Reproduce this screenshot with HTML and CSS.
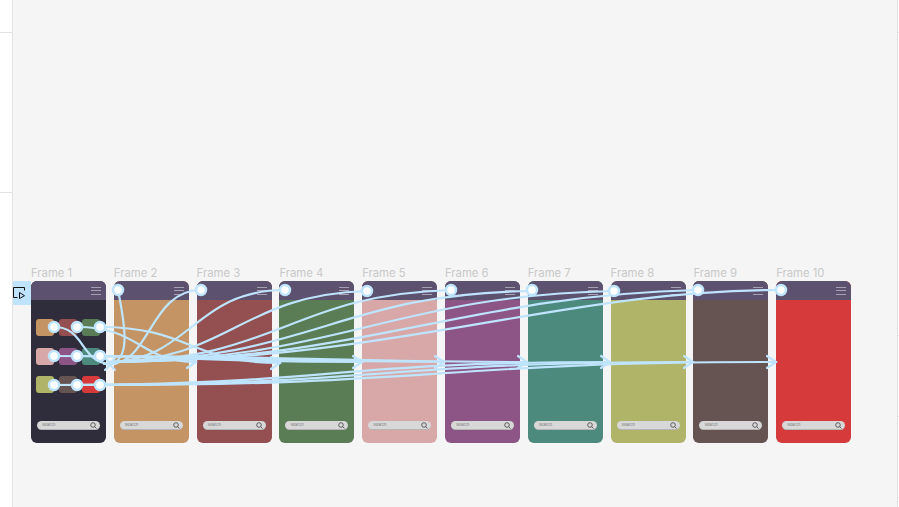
FILE: index.html
```html
<!DOCTYPE html>
<html lang="en">
<head>
<meta charset="utf-8">
<title>Prototype flow</title>
<link rel="stylesheet" href="styles.css">
</head>
<body>
<div class="page">
  <div class="ruler ruler-left"><i class="tick t1"></i><i class="tick t2"></i></div>
  <main class="canvas">
    <div class="frames">
      <section class="item"><h2>Frame 1</h2><div class="frame f1 home">
        <div class="start"><svg width="18" height="24" viewBox="0 0 18 24"><path d="M4.500 16.500H.500V6.500H11.500V9.500" class="sk"/><path d="M6.500 11.500L11.500 14.700 6.500 17.500Z" class="sk"/></svg></div>
        <div class="bar"><span class="menu"><i></i><i></i><i></i></span></div>
        <div class="body">
          <div class="tiles">
            <b class="c2"></b><b class="c3"></b><b class="c4"></b>
            <b class="c5"></b><b class="c6"></b><b class="c7"></b>
            <b class="c8"></b><b class="c9"></b><b class="c10"></b>
          </div>
          <div class="search"><span>Search</span><svg width="7" height="7" viewBox="0 0 7 7"><circle cx="3" cy="3" r="2.300"/><path d="M4.700 4.700L6.500 6.500"/></svg></div>
        </div></div></section>
      <section class="item"><h2>Frame 2</h2><div class="frame c2"><div class="bar"><span class="menu"><i></i><i></i><i></i></span></div><div class="body"><div class="search"><span>Search</span><svg width="7" height="7" viewBox="0 0 7 7"><circle cx="3" cy="3" r="2.300"/><path d="M4.700 4.700L6.500 6.500"/></svg></div></div></div></section>
      <section class="item"><h2>Frame 3</h2><div class="frame c3"><div class="bar"><span class="menu"><i></i><i></i><i></i></span></div><div class="body"><div class="search"><span>Search</span><svg width="7" height="7" viewBox="0 0 7 7"><circle cx="3" cy="3" r="2.300"/><path d="M4.700 4.700L6.500 6.500"/></svg></div></div></div></section>
      <section class="item"><h2>Frame 4</h2><div class="frame c4"><div class="bar"><span class="menu"><i></i><i></i><i></i></span></div><div class="body"><div class="search"><span>Search</span><svg width="7" height="7" viewBox="0 0 7 7"><circle cx="3" cy="3" r="2.300"/><path d="M4.700 4.700L6.500 6.500"/></svg></div></div></div></section>
      <section class="item"><h2>Frame 5</h2><div class="frame c5"><div class="bar"><span class="menu"><i></i><i></i><i></i></span></div><div class="body"><div class="search"><span>Search</span><svg width="7" height="7" viewBox="0 0 7 7"><circle cx="3" cy="3" r="2.300"/><path d="M4.700 4.700L6.500 6.500"/></svg></div></div></div></section>
      <section class="item"><h2>Frame 6</h2><div class="frame c6"><div class="bar"><span class="menu"><i></i><i></i><i></i></span></div><div class="body"><div class="search"><span>Search</span><svg width="7" height="7" viewBox="0 0 7 7"><circle cx="3" cy="3" r="2.300"/><path d="M4.700 4.700L6.500 6.500"/></svg></div></div></div></section>
      <section class="item"><h2>Frame 7</h2><div class="frame c7"><div class="bar"><span class="menu"><i></i><i></i><i></i></span></div><div class="body"><div class="search"><span>Search</span><svg width="7" height="7" viewBox="0 0 7 7"><circle cx="3" cy="3" r="2.300"/><path d="M4.700 4.700L6.500 6.500"/></svg></div></div></div></section>
      <section class="item"><h2>Frame 8</h2><div class="frame c8"><div class="bar"><span class="menu"><i></i><i></i><i></i></span></div><div class="body"><div class="search"><span>Search</span><svg width="7" height="7" viewBox="0 0 7 7"><circle cx="3" cy="3" r="2.300"/><path d="M4.700 4.700L6.500 6.500"/></svg></div></div></div></section>
      <section class="item"><h2>Frame 9</h2><div class="frame c9"><div class="bar"><span class="menu"><i></i><i></i><i></i></span></div><div class="body"><div class="search"><span>Search</span><svg width="7" height="7" viewBox="0 0 7 7"><circle cx="3" cy="3" r="2.300"/><path d="M4.700 4.700L6.500 6.500"/></svg></div></div></div></section>
      <section class="item"><h2>Frame 10</h2><div class="frame c10"><div class="bar"><span class="menu"><i></i><i></i><i></i></span></div><div class="body"><div class="search"><span>Search</span><svg width="7" height="7" viewBox="0 0 7 7"><circle cx="3" cy="3" r="2.300"/><path d="M4.700 4.700L6.500 6.500"/></svg></div></div></div></section>
    </div>
    <svg class="wires" width="899" height="507" viewBox="0 0 899 507">
      <g class="w">
        <path d="M118 290C126 330 130 360 110 364"/>
        <path d="M201 290C150 290 150 364 110 364"/>
        <path d="M285 290C195 290 190 360 110 362"/>
        <path d="M367 291C240 295 230 360 110 362"/>
        <path d="M451 290C290 295 280 360 110 362"/>
        <path d="M532 291C340 293 310 360 110 362"/>
        <path d="M614 291C390 296 340 360 110 362"/>
        <path d="M698 290C460 296 370 360 110 362"/>
        <path d="M781 290C560 290 400 360 110 362"/>
        <path d="M54 327C85 327 80 362 110 364"/>
        <path d="M77 327C140 327 140 362 196 362"/>
        <path d="M100 327C190 327 190 363 280 363"/>
        <path d="M54 356C200 356 200 362 362 362"/>
        <path d="M77 356C260 356 260 362 444 362"/>
        <path d="M100 356C310 356 310 362 527 362"/>
        <path d="M54 385C330 385 330 362 610 362"/>
        <path d="M77 385C380 385 380 362 693 362"/>
        <path d="M100 385C440 385 440 362 776 362"/>
      </g>
      <g class="w heads">
        <path d="M105 358L111 364 105 370"/><path d="M115 358L109 364 115 370"/><path d="M104 364H116"/>
        <path d="M187 356L196 362 187 368"/><path d="M271 357L280 363 271 369"/>
        <path d="M353 356L362 362 353 368"/><path d="M435 356L444 362 435 368"/>
        <path d="M518 356L527 362 518 368"/><path d="M601 356L610 362 601 368"/>
        <path d="M684 356L693 362 684 368"/><path d="M767 356L776 362 767 368"/>
      </g>
      <g class="dots">
        <circle cx="54" cy="327"/><circle cx="77" cy="327"/><circle cx="100" cy="327"/>
        <circle cx="54" cy="356"/><circle cx="77" cy="356"/><circle cx="100" cy="356"/>
        <circle cx="54" cy="385"/><circle cx="77" cy="385"/><circle cx="100" cy="385"/>
        <circle cx="118" cy="290"/><circle cx="201" cy="290"/><circle cx="285" cy="290"/>
        <circle cx="367" cy="291"/><circle cx="451" cy="290"/><circle cx="532" cy="290"/>
        <circle cx="614" cy="291"/><circle cx="698" cy="290"/><circle cx="781" cy="290"/>
      </g>
    </svg>
  </main>
  <div class="ruler ruler-right"><i class="tick r1"></i><i class="tick r2"></i><i class="tick r3"></i><i class="tick r4"></i></div>
</div>
</body>
</html>
```
FILE: styles.css
```css
html, body { margin: 0; height: 100%; overflow: hidden; background: #fff; }
.page { display: flex; width: 899px; height: 507px; font-family: Inter, "Liberation Sans", sans-serif; }
.ruler { display: flex; flex-direction: column; flex: none; background: #fff; }
.ruler-left { width: 12px; }
.ruler-right { width: 1px; }
.tick { display: block; height: 1px; background: #e2e2e2; }
.t1 { margin-top: 32px; }
.t2 { margin-top: 159px; }
.r1 { margin-top: 32px; }
.r2 { margin-top: 302px; }
.r3 { margin-top: 80px; }
.r4 { margin-top: 80px; }
.canvas { position: relative; flex: 1; background: #f5f5f5; border-left: 1px solid #e2e2e2; border-right: 1px solid #e2e2e2; }
.frames { display: flex; gap: 7.800px; padding: 266px 0 0 18px; }
.item { width: 75px; flex: none; }
.item h2 { margin: 0 0 1px; height: 14px; font-size: 11.300px; line-height: 14px; font-weight: 400; color: #c9c9c9; white-space: nowrap; }
.frame { position: relative; display: flex; flex-direction: column; height: 162px; border-radius: 6px; }
.bar { flex: none; display: flex; justify-content: flex-end; align-items: center; height: 19px; padding-right: 5px; background: #5d5170; border-radius: 6px 6px 0 0; }
.menu { display: flex; flex-direction: column; gap: 2.500px; width: 10px; }
.menu i { display: block; height: 1px; background: #a79fb2; }
.body { flex: 1; display: flex; flex-direction: column; justify-content: flex-end; padding: 0 6px 13px; }
.search { display: flex; align-items: center; justify-content: space-between; height: 8px; padding: 0 3px 0 5px; background: #d8d8d8; border-radius: 5px; border-bottom: 1px solid #b5b5b5; }
.search span { font-size: 4px; line-height: 8px; color: #777; }
.search svg { fill: none; stroke: #444; stroke-width: .8; }
.home { background: #2f2c3b; }
.tiles { display: grid; grid-template-columns: repeat(3, 18px); grid-auto-rows: 17px; column-gap: 5px; row-gap: 11.500px; margin: 19px 0 auto -1px; }
.tiles b { display: block; border-radius: 3px; }
.c2 { background: #c49464; }
.c3 { background: #945050; }
.c4 { background: #5a7d56; }
.c5 { background: #d8a8a8; }
.c6 { background: #8c5586; }
.c7 { background: #4d8a7e; }
.c8 { background: #afb468; }
.c9 { background: #655452; }
.c10 { background: #d63a3a; }
.start { position: absolute; left: -18px; top: 0; width: 18px; height: 24px; background: #bfe3fb; }
.start svg { display: block; }
.sk { fill: none; stroke: #111; stroke-width: 1; }
.wires { position: absolute; left: -13px; top: 0; pointer-events: none; }
.w path { fill: none; stroke: #bfe4fd; stroke-width: 2.200; stroke-linecap: round; }
.dots circle { r: 5px; fill: #fff; stroke: #bfe4fd; stroke-width: 2.500; }
```
